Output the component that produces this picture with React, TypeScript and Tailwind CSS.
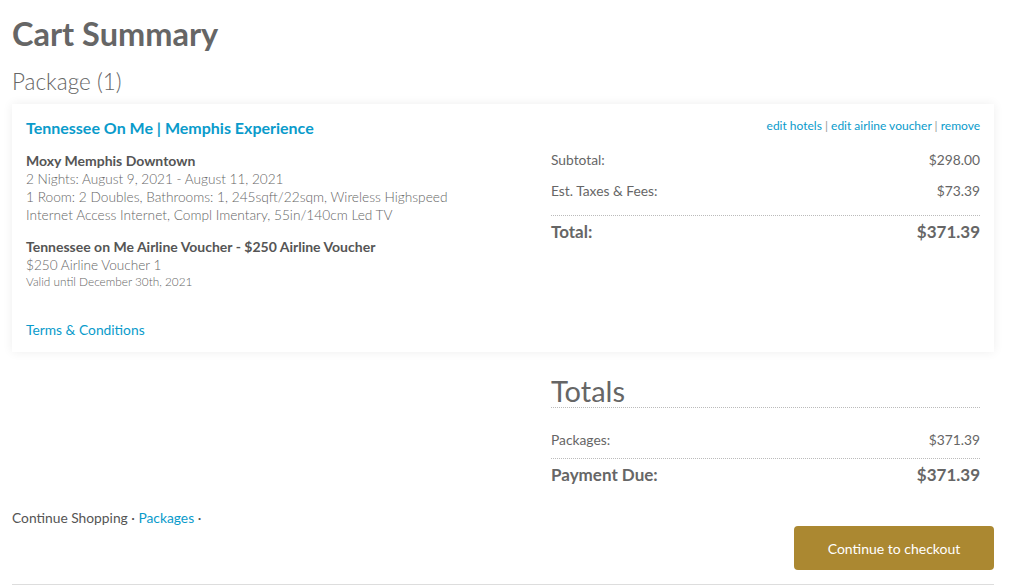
import React from 'react';

const lato = { fontFamily: 'Lato, "Open Sans", sans-serif' };

const App: React.FC = () => {
  return (
    <div className="min-h-screen bg-white text-[#666]" style={lato}>
      <div className="ml-3 w-[982px]">
        <h1 className="pt-[14px] text-[32.5px] font-bold leading-[40px] text-[#666]">Cart Summary</h1>
        <h2 className="mt-[15px] text-[22.5px] font-light leading-[26px] text-[#666]">Package (1)</h2>

        <div className="mt-[9px] bg-white px-[14px] pb-[13px] pt-[14px] shadow-[0_0_10px_rgba(0,0,0,0.07)]">
          <div className="flex">
            <div className="w-[525px]">
              <a className="block text-[16px] font-bold leading-[20px] text-[#0a9bcb]">
                Tennessee On Me | Memphis Experience
              </a>

              <div className="mt-[14px]">
                <p className="text-[14px] font-bold leading-[18px] text-[#555]">Moxy Memphis Downtown</p>
                <p className="text-[13.6px] font-light leading-[18px] text-[#666]">2 Nights: August 9, 2021 - August 11, 2021</p>
                <p className="w-[440px] text-[13.7px] font-light leading-[18px] text-[#666]">
                  1 Room: 2 Doubles, Bathrooms: 1, 245sqft/22sqm, Wireless Highspeed Internet Access Internet, Compl Imentary, 55in/140cm Led TV
                </p>
              </div>

              <div className="mt-[14px]">
                <p className="text-[14px] font-bold leading-[18px] text-[#555]">
                  Tennessee on Me Airline Voucher - $250 Airline Voucher
                </p>
                <p className="text-[13.6px] font-light leading-[18px] text-[#666]">$250 Airline Voucher 1</p>
                <p className="text-[11.8px] font-light leading-[16px] text-[#666]">Valid until December 30th, 2021</p>
              </div>

              <a className="mt-[31px] block text-[13.8px] leading-[18px] text-[#0a9bcb]">Terms &amp; Conditions</a>
            </div>

            <div className="flex-1">
              <div className="text-right text-[12px] leading-[16px] text-[#0a9bcb]">
                <a>edit hotels</a>
                <span className="text-[#999]"> | </span>
                <a>edit airline voucher</a>
                <span className="text-[#999]"> | </span>
                <a>remove</a>
              </div>

              <div className="mt-[17px] flex justify-between text-[13.8px] leading-[18px] text-[#666]">
                <span>Subtotal:</span>
                <span>$298.00</span>
              </div>
              <div className="mt-[13px] flex justify-between border-b border-dotted border-[#bbb] pb-[15px] text-[13.8px] leading-[18px] text-[#666]">
                <span>Est. Taxes &amp; Fees:</span>
                <span>$73.39</span>
              </div>
              <div className="mt-[5px] flex justify-between text-[17px] font-bold leading-[22px] text-[#666]">
                <span>Total:</span>
                <span>$371.39</span>
              </div>
            </div>
          </div>
        </div>

        <div className="mt-[23px] flex justify-end pr-[14px]">
          <div className="w-[429px]">
            <h3 className="border-b border-dotted border-[#bbb] text-[29px] leading-[32px] text-[#666]">Totals</h3>
            <div className="mt-[23px] flex justify-between border-b border-dotted border-[#bbb] pb-[9px] text-[13.8px] leading-[18px] text-[#666]">
              <span>Packages:</span>
              <span>$371.39</span>
            </div>
            <div className="mt-[5px] flex justify-between text-[17px] font-bold leading-[22px] text-[#666]">
              <span>Payment Due:</span>
              <span>$371.39</span>
            </div>
          </div>
        </div>

        <div className="mt-[23px] flex items-start justify-between border-b border-[#ddd] pb-[14px]">
          <p className="text-[13.8px] leading-[18px] text-[#555]">
            Continue Shopping · <a className="text-[#0a9bcb]">Packages</a> ·
          </p>
          <button className="mt-[17px] h-[44px] w-[200px] rounded-[4px] bg-[#ab8831] text-[14px] text-white">
            Continue to checkout
          </button>
        </div>
      </div>
    </div>
  );
};

export default App;
